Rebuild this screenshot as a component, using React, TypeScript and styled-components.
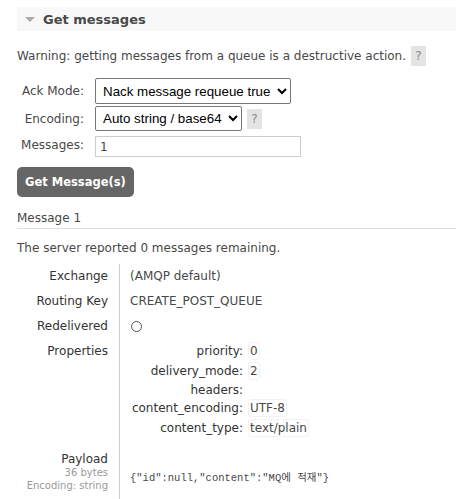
import React from 'react'
import styled, { createGlobalStyle } from 'styled-components'

const GlobalStyle = createGlobalStyle`
  body {
    margin: 0;
    background: #fff;
    color: #484848;
    font: 12px 'DejaVu Sans', Verdana, sans-serif;
  }
`

const StyledPage = styled.div`
  padding: 7px 0 0 17px;
`

const StyledSectionHeader = styled.div`
  display: flex;
  align-items: center;
  height: 24px;
  padding-left: 8px;
  background: #f8f8f8;
`

const StyledTriangle = styled.span`
  width: 0;
  height: 0;
  border-left: 5px solid transparent;
  border-right: 5px solid transparent;
  border-top: 5px solid #aaa;
  margin-right: 8px;
`

const StyledSectionTitle = styled.h2`
  margin: 0;
  font-size: 13px;
  font-weight: bold;
  color: #484848;
`

const StyledParagraph = styled.p`
  display: flex;
  align-items: center;
  margin: ${(p: { $top: number }) => p.$top}px 0 0;
  line-height: 19px;
`

const StyledHelp = styled.span`
  display: inline-block;
  width: 15px;
  height: 20px;
  line-height: 20px;
  margin-left: 5px;
  text-align: center;
  background: #e4e4e4;
  color: #888;
`

const StyledForm = styled.div`
  display: grid;
  grid-template-columns: 67px auto;
  column-gap: 11px;
  row-gap: 2px;
  margin-top: 12px;
  align-items: center;
`

const StyledLabel = styled.label`
  text-align: right;
`

const StyledControlRow = styled.div`
  display: flex;
  align-items: center;
`

const StyledSelect = styled.select`
  height: ${(p: { $height: number }) => p.$height}px;
  font: 13.33px 'Liberation Sans', Arial, sans-serif;
  color: #000;
  border: 1px solid #767676;
  border-radius: 2px;
  background: #fff;
  padding: 0 3px;
`

const StyledInput = styled.input`
  box-sizing: border-box;
  width: 206px;
  height: 21px;
  margin-top: 3px;
  font: 12px 'DejaVu Sans', Verdana, sans-serif;
  color: #484848;
  border: 1px solid #ccc;
  padding: 0 4px;
`

const StyledButton = styled.button`
  margin-top: 10px;
  height: 30px;
  padding: 0 8px;
  border: 0;
  border-radius: 5px;
  background: #666;
  color: #fff;
  font: bold 11.5px 'DejaVu Sans', Verdana, sans-serif;
`

const StyledMessageTitle = styled.div`
  margin-top: 13px;
  padding-bottom: 2px;
  border-bottom: 1px solid #ddd;
  line-height: 16px;
`

const StyledDetails = styled.div`
  display: grid;
  grid-template-columns: 102px 1fr;
  margin-top: 6px;
`

const StyledKey = styled.div`
  text-align: right;
  padding: 0 11px 0 0;
  line-height: 25px;
  color: #333;
`

const StyledValue = styled.div`
  border-left: 1px solid #ccc;
  padding-left: 10px;
  line-height: 25px;
  min-height: 25px;
`

const StyledCircle = styled.span`
  display: inline-block;
  width: 9px;
  height: 9px;
  border: 1px solid #555;
  border-radius: 50%;
  vertical-align: -2px;
  margin-left: 1px;
`

const StyledProps = styled.div`
  display: grid;
  grid-template-columns: 113px auto;
  column-gap: 5px;
  justify-content: start;
  padding: 2px 0 12px;
`

const StyledPropKey = styled.div`
  text-align: right;
  color: #333;
  line-height: ${(p: { $h: number }) => p.$h}px;
`

const StyledPropValue = styled.div`
  line-height: ${(p: { $h: number }) => p.$h}px;
`

const StyledBoxed = styled.span`
  border: 1px solid #f2f2f2;
  border-radius: 3px;
  padding: 1px 1px;
`

const StyledPayloadKey = styled(StyledKey)`
  line-height: 13px;
  padding-top: 2px;
`

const StyledSmall = styled.div`
  font-size: 10px;
  color: #999;
`

const StyledPayloadValue = styled(StyledValue)`
  display: flex;
  align-items: center;
  min-height: 50px;
`

const StyledPre = styled.span`
  font: 10.5px 'Liberation Mono', 'Noto Sans CJK KR', monospace;
  color: #484848;
`

const properties = [
  { key: 'priority:', value: '0', h: 20 },
  { key: 'delivery_mode:', value: '2', h: 21 },
  { key: 'headers:', value: '', h: 17 },
  { key: 'content_encoding:', value: 'UTF-8', h: 19 },
  { key: 'content_type:', value: 'text/plain', h: 21 },
]

export default function App() {
  return (
    <StyledPage>
      <GlobalStyle />
      <StyledSectionHeader>
        <StyledTriangle />
        <StyledSectionTitle>Get messages</StyledSectionTitle>
      </StyledSectionHeader>
      <StyledParagraph $top={15}>
        Warning: getting messages from a queue is a destructive action.
        <StyledHelp>?</StyledHelp>
      </StyledParagraph>
      <StyledForm>
        <StyledLabel>Ack Mode:</StyledLabel>
        <StyledControlRow>
          <StyledSelect $height={26} defaultValue='nack'>
            <option value='nack'>Nack message requeue true</option>
          </StyledSelect>
        </StyledControlRow>
        <StyledLabel>Encoding:</StyledLabel>
        <StyledControlRow>
          <StyledSelect $height={25} defaultValue='auto'>
            <option value='auto'>Auto string / base64</option>
          </StyledSelect>
          <StyledHelp>?</StyledHelp>
        </StyledControlRow>
        <StyledLabel>Messages:</StyledLabel>
        <StyledControlRow>
          <StyledInput defaultValue='1' />
        </StyledControlRow>
      </StyledForm>
      <StyledButton>Get Message(s)</StyledButton>
      <StyledMessageTitle>Message 1</StyledMessageTitle>
      <StyledParagraph $top={10}>The server reported 0 messages remaining.</StyledParagraph>
      <StyledDetails>
        <StyledKey>Exchange</StyledKey>
        <StyledValue>(AMQP default)</StyledValue>
        <StyledKey>Routing Key</StyledKey>
        <StyledValue>CREATE_POST_QUEUE</StyledValue>
        <StyledKey>Redelivered</StyledKey>
        <StyledValue><StyledCircle /></StyledValue>
        <StyledKey>Properties</StyledKey>
        <StyledValue>
          <StyledProps>
            {properties.map(p => (
              <React.Fragment key={p.key}>
                <StyledPropKey $h={p.h}>{p.key}</StyledPropKey>
                <StyledPropValue $h={p.h}>
                  {p.value && <StyledBoxed>{p.value}</StyledBoxed>}
                </StyledPropValue>
              </React.Fragment>
            ))}
          </StyledProps>
        </StyledValue>
        <StyledPayloadKey>
          Payload
          <StyledSmall>36 bytes</StyledSmall>
          <StyledSmall>Encoding: string</StyledSmall>
        </StyledPayloadKey>
        <StyledPayloadValue>
          <StyledPre>{'{"id":null,"content":"MQ에 적재"}'}</StyledPre>
        </StyledPayloadValue>
      </StyledDetails>
    </StyledPage>
  )
}
